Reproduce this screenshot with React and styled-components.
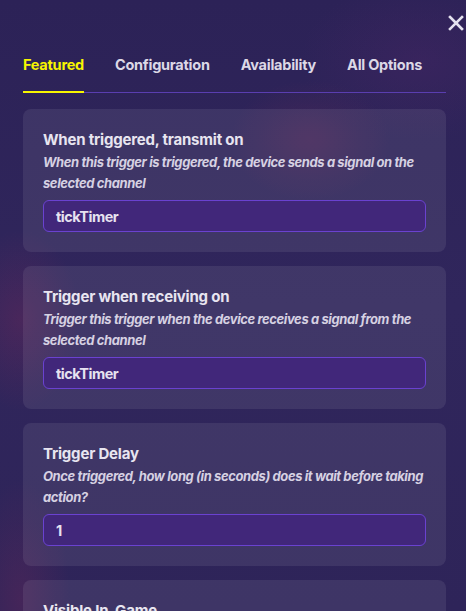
import styled, { createGlobalStyle } from 'styled-components';

const GlobalStyle = createGlobalStyle`
    html, body {
        margin: 0;
        padding: 0;
        background-color: #2c2358;
        overflow: hidden;
    }
    * {
        box-sizing: border-box;
    }
`;

const tabs = ["Featured", "Configuration", "Availability", "All Options"];

const options = [
    {
        title: "When triggered, transmit on",
        description: "When this trigger is triggered, the device sends a signal on the selected channel",
        value: "tickTimer"
    },
    {
        title: "Trigger when receiving on",
        description: "Trigger this trigger when the device receives a signal from the selected channel",
        value: "tickTimer"
    },
    {
        title: "Trigger Delay",
        description: "Once triggered, how long (in seconds) does it wait before taking action?",
        value: "1"
    },
    {
        title: "Visible In-Game",
        description: "Should the trigger be visible during the game?",
        value: "No"
    }
];

export default function App() {
    return (
        <>
            <GlobalStyle />
            <Panel>
                <CloseButton aria-label="close">
                    <svg width="16" height="16" viewBox="0 0 16 16">
                        <path d="M2 2 L14 14 M14 2 L2 14" stroke="#e4e1ee" strokeWidth="2.6" strokeLinecap="square" />
                    </svg>
                </CloseButton>
                <TabBar>
                    {tabs.map((tab, i) => (
                        <Tab key={tab} active={i === 0}>{tab}</Tab>
                    ))}
                </TabBar>
                <Cards>
                    {options.map(opt => (
                        <Card key={opt.title}>
                            <Title>{opt.title}</Title>
                            <Description>{opt.description}</Description>
                            <Field>{opt.value}</Field>
                        </Card>
                    ))}
                </Cards>
            </Panel>
        </>
    );
}

// styledComponents
const Panel = styled.div`
    position: relative;
    width: 466px;
    height: 611px;
    overflow: hidden;
    padding: 55px 20px 0 23px;
    font-family: Inter, "Noto Sans", sans-serif;
    background-color: #2c2358;
    background-image:
        radial-gradient(ellipse 60px 90px at 20px 320px, rgba(120, 40, 90, 0.35), transparent),
        radial-gradient(ellipse 80px 60px at 310px 140px, rgba(150, 50, 90, 0.2), transparent),
        radial-gradient(ellipse 120px 80px at 420px 60px, rgba(90, 40, 110, 0.25), transparent),
        radial-gradient(ellipse 50px 120px at 20px 600px, rgba(120, 40, 90, 0.3), transparent),
        linear-gradient(180deg, #2c2257 0%, #30265c 50%, #2e2459 100%);
`;

const CloseButton = styled.button`
    position: absolute;
    top: 15px;
    right: 2px;
    width: 16px;
    height: 16px;
    padding: 0;
    border: none;
    background: none;
    cursor: pointer;
    display: flex;
    align-items: center;
    justify-content: center;
`;

const TabBar = styled.div`
    display: flex;
    gap: 31px;
    border-bottom: 1px solid #5a3eb0;
`;

const Tab = styled.div`
    font-size: 14.5px;
    font-weight: 700;
    line-height: 20px;
    letter-spacing: -0.25px;
    color: ${props => props.active ? '#f7f500' : '#dcd8e6'};
    padding-bottom: 16px;
    margin-bottom: -1px;
    border-bottom: 2px solid ${props => props.active ? '#f7f500' : 'transparent'};
    cursor: pointer;
`;

const Cards = styled.div`
    display: flex;
    flex-direction: column;
    gap: 14px;
    margin-top: 16px;
`;

const Card = styled.div`
    background-color: rgba(255, 255, 255, 0.08);
    border-radius: 8px;
    padding: 20px;
`;

const Title = styled.div`
    font-size: 15px;
    font-weight: 700;
    line-height: 22px;
    letter-spacing: -0.2px;
    color: #e8e5f0;
`;

const Description = styled.div`
    margin-top: 1px;
    font-size: 13px;
    font-style: italic;
    font-weight: 700;
    line-height: 21px;
    letter-spacing: -0.4px;
    color: #d6d1e2;
`;

const Field = styled.div`
    margin-top: 6px;
    height: 32px;
    display: flex;
    align-items: center;
    padding: 0 12px;
    border: 1px solid #6a42d0;
    border-radius: 6px;
    background-color: #41277a;
    font-size: 14.5px;
    font-weight: 700;
    letter-spacing: -0.5px;
    color: #e6e2f0;
`;
